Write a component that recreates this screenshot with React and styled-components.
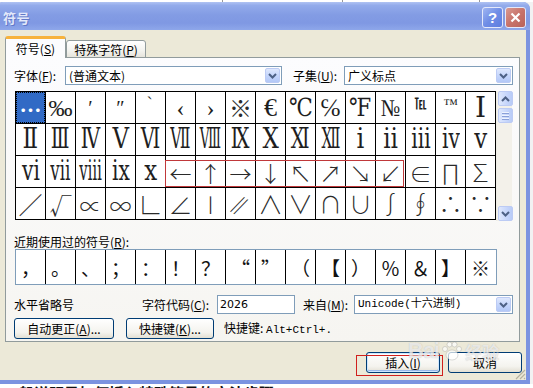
import React from 'react';
import styled, { createGlobalStyle } from 'styled-components';

const UI = `"Noto Sans CJK SC", "Liberation Sans", sans-serif`;
const SERIF = `"Liberation Serif", "DejaVu Serif", "Noto Sans CJK SC", serif`;
const MONO = `"Liberation Mono", "Noto Sans CJK SC", monospace`;

const GlobalStyle = createGlobalStyle`
  html, body { margin: 0; padding: 0; width: 533px; height: 388px; overflow: hidden; background: #f2f2f2; }
  * { box-sizing: border-box; }
`;

const Screen = styled.div`
  width: 533px; height: 388px; overflow: hidden; position: relative;
  display: flex; flex-direction: column; background: #f2f2f2;
  font-family: ${UI}; font-size: 12px; color: #000;
`;

const TopStrip = styled.div`
  flex: none; height: 2px; background:
    linear-gradient(90deg, transparent 222px, #999 222px, #999 223px, transparent 223px,
      transparent 342px, #999 342px, #999 343px, transparent 343px,
      transparent 479px, #999 479px, #999 480px, transparent 480px), #fff;
`;

const Window = styled.div`
  flex: none; width: 534px; height: 382px; margin-left: -4px;
  display: flex; flex-direction: column;
  background: #7b93e0; border-radius: 7px 7px 0 0; overflow: hidden;
`;

const TitleBar = styled.div`
  flex: none; height: 28px; display: flex; align-items: center;
  padding: 2px 4px 0 7px;
  background: linear-gradient(#b0c3f3 0%, #93abeb 12%, #839ce4 45%, #7f98e3 75%, #8ea7ea 100%);
`;

const Title = styled.div`
  flex: 1; color: #e2e8fa; font-weight: bold; font-size: 13px; letter-spacing: 0.5px;
  text-shadow: 1px 1px 0 #6178c8;
`;

const CapButton = styled.div`
  width: 21px; height: 21px; margin-left: 2px; border: 1px solid #e4e9fb; border-radius: 3px;
  display: flex; align-items: center; justify-content: center;
  color: #fff; font-family: "Liberation Sans", sans-serif; font-weight: bold; font-size: 15px;
  background: ${p => p.$close
    ? 'linear-gradient(135deg, #d99a92 0%, #c8736a 50%, #b9625a 100%)'
    : 'linear-gradient(135deg, #9fb6f2 0%, #6f8de6 50%, #5d7ddf 100%)'};
`;

const Body = styled.div`
  flex: 1; margin: 0 4px 4px 4px; background: #ece9d8; position: relative;
  display: flex; flex-direction: column; padding: 7px 6px 0 5px;
`;

const TabStrip = styled.div`
  flex: none; height: 21px; display: flex; align-items: flex-end; margin-bottom: -1px;
  position: relative; z-index: 1;
`;

const Tab = styled.div`
  height: ${p => (p.$active ? 22 : 18)}px;
  width: ${p => p.$w}px;
  display: flex; align-items: center; justify-content: center;
  border: 1px solid #919b9c; border-bottom: ${p => (p.$active ? 'none' : '1px solid #919b9c')};
  border-radius: 3px 3px 0 0;
  ${p => p.$active
    ? 'border-top: 3px solid #f7b23c; background: #fcfcfe;'
    : 'background: linear-gradient(#ffffff, #f3f3ef 60%, #e6e4dc);'}
  padding-bottom: ${p => (p.$active ? 1 : 0)}px;
`;

const Panel = styled.div`
  flex: none; height: 285px; border: 1px solid #919b9c;
  background: linear-gradient(#fcfcfe, #f6f5f1);
  display: flex; flex-direction: column; padding: 8px 0 0 9px;
`;

const Row = styled.div`
  display: flex; align-items: center; height: ${p => p.$h || 19}px; margin-top: ${p => p.$mt || 0}px;
`;

const Label = styled.div`
  width: ${p => p.$w}px; margin-left: ${p => p.$ml || -1}px; white-space: nowrap; line-height: 15px;
`;

const Combo = styled.div`
  width: ${p => p.$w}px; height: ${p => p.$h || 19}px; border: 1px solid #7f9db9; background: #fff;
  display: flex; align-items: center; padding: 1px;
  margin-left: ${p => p.$ml || 0}px;
`;

const ComboText = styled.div`
  flex: 1; padding-left: 2px; white-space: nowrap; overflow: hidden; line-height: 15px;
  font-family: ${p => (p.$mono ? MONO : UI)}; font-size: ${p => (p.$mono ? 11 : 12)}px;
`;

const ArrowBtn = styled.div`
  width: 15px; align-self: stretch; border: 1px solid #bccbf4; border-radius: 2px;
  background: linear-gradient(#dfe8fd, #c1d3fb 60%, #b3c8f7);
  display: flex; align-items: center; justify-content: center;
`;

const Chevron = ({ up }) => (
  <svg width="9" height="6" viewBox="0 0 9 6">
    <path d={up ? 'M1 5 L4.5 1.5 L8 5' : 'M1 1 L4.5 4.5 L8 1'} fill="none" stroke="#4d6185" strokeWidth="2" />
  </svg>
);

const GridWrap = styled.div`
  display: flex; margin-top: 6px; height: 130px;
`;

const SymbolGrid = styled.div`
  position: relative; display: grid; grid-template-columns: repeat(16, 29px); grid-auto-rows: 31px;
  gap: 1px; background: #000; border: 1px solid #000; align-self: flex-start;
`;

const Cell = styled.div`
  background: ${p => (p.$sel ? '#316ac5' : '#fff')};
  color: ${p => (p.$sel ? '#fff' : p.$cjk ? '#2a2a2a' : '#1e1e1e')};
  display: flex; align-items: ${p => p.$al || 'center'}; justify-content: center;
  font-family: ${p => (p.$cjk ? UI : SERIF)}; font-size: ${p => p.$fs || 24}px; line-height: 1;
  font-weight: ${p => p.$fw || (p.$cjk ? 300 : 400)};
  white-space: nowrap;
  padding-top: ${p => p.$pt || 0}px;
  ${p => (p.$sel ? 'outline: 1px dotted #000; outline-offset: -1px;' : '')}
`;

const Glyph = styled.span`
  display: inline-block; transform: scaleX(${p => p.$sx || 1}) skewX(${p => p.$sk || 0}deg);
`;

const Highlight = styled.div`
  position: absolute; left: 149px; top: 68px; width: 239px; height: 27px;
  border: 1px solid #c0383a; pointer-events: none;
`;

const ScrollBar = styled.div`
  width: 16px; height: 130px; display: flex; flex-direction: column; padding: 0 0 0 1px;
  background: #f3f1ea; border-left: 1px solid #eeede5;
`;

const ScrollBtn = styled.div`
  width: 15px; height: ${p => p.$h || 15}px; border: 1px solid #bccbf4; border-radius: 2px;
  background: linear-gradient(90deg, #dfe8fd, #c6d6fb 60%, #b8cbf7);
  display: flex; align-items: center; justify-content: center; flex-direction: column; gap: 2px;
  margin-top: ${p => p.$mt || 0}px;
`;

const GripLine = styled.div`
  width: 7px; height: 1px; background: #eef3fe; box-shadow: 0 1px 0 #8aa0d8;
`;

const RecentLabel = styled.div`
  margin-top: 13px; height: 15px; line-height: 15px; margin-left: -1px;
`;

const RecentRow = styled.div`
  display: flex; width: 482px; height: 36px; border: 1px solid #7f9db9; background: #fff;
`;

const RecentCell = styled.div`
  width: ${p => (p.$first ? 29 : 30)}px; flex: none; height: 100%;
  border-left: ${p => (p.$first ? 'none' : '1px solid #000')};
  display: flex; align-items: center; justify-content: center;
  font-family: ${UI}; font-size: 19px; line-height: 1;
  color: #111;
`;

const TextInput = styled.div`
  width: ${p => p.$w}px; height: 19px; border: 1px solid #7f9db9; background: #fff;
  padding-left: 2px; line-height: 17px; font-family: "DejaVu Sans", sans-serif; font-size: 11px;
  margin-left: ${p => p.$ml || 0}px;
`;

const Button = styled.div`
  width: ${p => p.$w}px; height: 21px; border: 1px solid #003c74; border-radius: 3px;
  background: linear-gradient(#ffffff, #f4f3ee 70%, #e3e0d4);
  display: flex; align-items: center; justify-content: center; white-space: nowrap;
  margin-left: ${p => p.$ml || 0}px; line-height: 15px;
  ${p => (p.$default ? 'box-shadow: inset 0 0 0 1px #cee7ff, inset 0 -1px 0 1px #98b8ea;' : '')}
`;

const Mono = styled.span`
  font-family: ${MONO}; font-size: 11px;
`;

const ButtonBar = styled.div`
  display: flex; justify-content: flex-end; margin-top: 10px; margin-right: -2px; position: relative;
`;

const RedBox = styled.div`
  position: absolute; right: 79px; top: 3px; width: 87px; height: 21px; border: 1px solid #d0201e;
  pointer-events: none;
`;

const Grip = styled.svg`
  position: absolute; right: 0; bottom: 0;
`;

const Watermark = styled.div`
  position: absolute; left: 408px; top: 338px; display: flex; align-items: center; gap: 2px;
  color: rgba(255, 255, 255, 0.7); pointer-events: none;
  text-shadow: 0 0 1px rgba(120, 120, 120, 0.5);
`;

const WmLatin = styled.span`
  font-family: "Liberation Sans", sans-serif; font-weight: bold; font-size: 22px; letter-spacing: -1px;
`;

const WmCjk = styled.span`
  font-family: ${UI}; font-size: 17px; font-weight: bold;
`;

const BackStrip = styled.div`
  flex: none; height: 4px; overflow: hidden; background: #fff; padding-left: 4px;
  font-family: ${UI}; font-weight: bold; font-size: 15px; line-height: 18px; color: #111;
  white-space: nowrap;
`;

const romanScale = { 'Ⅱ': 0.85, 'Ⅲ': 0.72, 'Ⅳ': 0.72, 'Ⅴ': 0.85, 'Ⅵ': 0.72, 'Ⅶ': 0.58, 'Ⅷ': 0.5, 'Ⅸ': 0.72, 'Ⅹ': 0.85, 'Ⅺ': 0.72, 'Ⅻ': 0.56,
  'ⅰ': 0.9, 'ⅱ': 0.85, 'ⅲ': 0.75, 'ⅳ': 0.75, 'ⅴ': 0.85, 'ⅵ': 0.75, 'ⅶ': 0.62, 'ⅷ': 0.55, 'ⅸ': 0.75, 'ⅹ': 0.85 };

const gridRows = [
  [
    { c: '…', sel: true, cjk: true, fs: 22, fw: 700 },
    { c: '‰', fs: 24 },
    { c: '′', fs: 20, al: 'flex-start', pt: 6 },
    { c: '″', fs: 20, al: 'flex-start', pt: 6 },
    { c: '‵', fs: 20, al: 'flex-start', pt: 6, cjk: true },
    { c: '‹', fs: 24 },
    { c: '›', fs: 24 },
    { c: '※', fs: 23, cjk: true },
    { c: '€', fs: 26 },
    { c: '℃', fs: 25, sx: 0.85 },
    { c: '℅', fs: 25 },
    { c: '℉', fs: 25, sx: 0.85 },
    { c: '№', fs: 24, sx: 0.85 },
    { c: '℡', fs: 15, al: 'flex-start', pt: 5, sx: 0.8, fw: 700 },
    { c: '™', fs: 15, al: 'flex-start', pt: 5 },
    { c: 'Ⅰ', fs: 28 },
  ],
  ['Ⅱ', 'Ⅲ', 'Ⅳ', 'Ⅴ', 'Ⅵ', 'Ⅶ', 'Ⅷ', 'Ⅸ', 'Ⅹ', 'Ⅺ', 'Ⅻ', 'ⅰ', 'ⅱ', 'ⅲ', 'ⅳ', 'ⅴ'].map(c => ({ c, fs: 27, sx: romanScale[c] })),
  [
    ...['ⅵ', 'ⅶ', 'ⅷ', 'ⅸ', 'ⅹ'].map(c => ({ c, fs: 27, sx: romanScale[c] })),
    ...['←', '↑', '→', '↓', '↖', '↗', '↘', '↙'].map(c => ({ c, fs: 22, cjk: true })),
    { c: '∈', fs: 22, cjk: true },
    { c: '∏', fs: 23, cjk: true },
    { c: '∑', fs: 23, cjk: true },
  ],
  [
    { c: '∕', fs: 24, cjk: true },
    { c: '√', fs: 22, cjk: true },
    { c: '∝', fs: 22, cjk: true },
    { c: '∞', fs: 22, cjk: true },
    { c: '∟', fs: 24, cjk: true },
    { c: '∠', fs: 24, cjk: true },
    { c: '∣', fs: 24, cjk: true },
    { c: '∥', fs: 22, cjk: true, sk: -25 },
    { c: '∧', fs: 25, cjk: true },
    { c: '∨', fs: 25, cjk: true },
    { c: '∩', fs: 23, cjk: true },
    { c: '∪', fs: 23, cjk: true },
    { c: '∫', fs: 23, cjk: true },
    { c: '∮', fs: 23, cjk: true },
    { c: '∴', fs: 23, cjk: true },
    { c: '∵', fs: 23, cjk: true },
  ],
];

const recent = ['，', '。', '、', '；', '：', '！', '？', '“', '”', '（', '【', '）', '％', '＆', '】', '※'];

export default function App() {
  return (
    <Screen>
      <GlobalStyle />
      <TopStrip />
      <Window>
        <TitleBar>
          <Title>符号</Title>
          <CapButton>?</CapButton>
          <CapButton $close>
            <svg width="11" height="11" viewBox="0 0 11 11">
              <path d="M1.5 1.5 L9.5 9.5 M9.5 1.5 L1.5 9.5" stroke="#fff" strokeWidth="2.2" />
            </svg>
          </CapButton>
        </TitleBar>
        <Body>
          <TabStrip>
            <Tab $active $w={61}>符号(<u>S</u>)</Tab>
            <Tab $w={80}>特殊字符(<u>P</u>)</Tab>
          </TabStrip>
          <Panel>
            <Row>
              <Label $w={51}>字体(<u>F</u>):</Label>
              <Combo $w={217}>
                <ComboText>(普通文本)</ComboText>
                <ArrowBtn><Chevron /></ArrowBtn>
              </Combo>
              <Label $w={51} $ml={11}>子集(<u>U</u>):</Label>
              <Combo $w={169}>
                <ComboText>广义标点</ComboText>
                <ArrowBtn><Chevron /></ArrowBtn>
              </Combo>
            </Row>
            <GridWrap>
              <SymbolGrid>
                {gridRows.flat().map((s, i) => (
                  <Cell key={i} $sel={s.sel} $cjk={s.cjk} $fs={s.fs} $al={s.al} $pt={s.pt} $fw={s.fw}>
                    <Glyph $sx={s.sx} $sk={s.sk}>{s.c}</Glyph>
                  </Cell>
                ))}
                <Highlight />
              </SymbolGrid>
              <ScrollBar>
                <ScrollBtn><Chevron up /></ScrollBtn>
                <ScrollBtn $mt={2}>
                  <GripLine /><GripLine /><GripLine />
                </ScrollBtn>
                <ScrollBtn $mt={83}><Chevron /></ScrollBtn>
              </ScrollBar>
            </GridWrap>
            <RecentLabel>近期使用过的符号(<u>R</u>):</RecentLabel>
            <RecentRow>
              {recent.map((c, i) => (
                <RecentCell key={i} $first={i === 0}>{c}</RecentCell>
              ))}
            </RecentRow>
            <Row $mt={10}>
              <Label $w={129}>水平省略号</Label>
              <Label $w={75} $ml={0}>字符代码(<u>C</u>):</Label>
              <TextInput $w={78}>2026</TextInput>
              <Label $w={51} $ml={8}>来自(<u>M</u>):</Label>
              <Combo $w={159}>
                <ComboText $mono>Unicode(十六进制)</ComboText>
                <ArrowBtn><Chevron /></ArrowBtn>
              </Combo>
            </Row>
            <Row $mt={4} $h={21}>
              <Button $w={100} $ml={-1}>自动更正(<u>A</u>)...</Button>
              <Button $w={88} $ml={12}>快捷键(<u>K</u>)...</Button>
              <Label $w={160} $ml={10}>快捷键: <Mono>Alt+Ctrl+.</Mono></Label>
            </Row>
          </Panel>
          <ButtonBar>
            <Button $w={74} $default>插入(<u>I</u>)</Button>
            <Button $w={74} $ml={8}>取消</Button>
            <RedBox />
          </ButtonBar>
          <Grip width="12" height="12" viewBox="0 0 12 12">
            <path d="M11 2 L2 11 M11 6 L6 11 M11 10 L10 11" stroke="#b6b29f" strokeWidth="1.2" />
          </Grip>
        </Body>
      </Window>
      <BackStrip>一般说明是如何插入特殊符号的方法步骤</BackStrip>
      <Watermark>
        <WmLatin>Bai</WmLatin>
        <svg width="22" height="22" viewBox="0 0 22 22">
          <g fill="rgba(255,255,255,0.7)" stroke="rgba(120,120,120,0.45)" strokeWidth="0.6">
            <ellipse cx="11" cy="15" rx="6" ry="5" />
            <circle cx="4" cy="9" r="2.5" />
            <circle cx="8.5" cy="4.5" r="2.5" />
            <circle cx="13.5" cy="4.5" r="2.5" />
            <circle cx="18" cy="9" r="2.5" />
          </g>
        </svg>
        <WmCjk>经验</WmCjk>
      </Watermark>
    </Screen>
  );
}
